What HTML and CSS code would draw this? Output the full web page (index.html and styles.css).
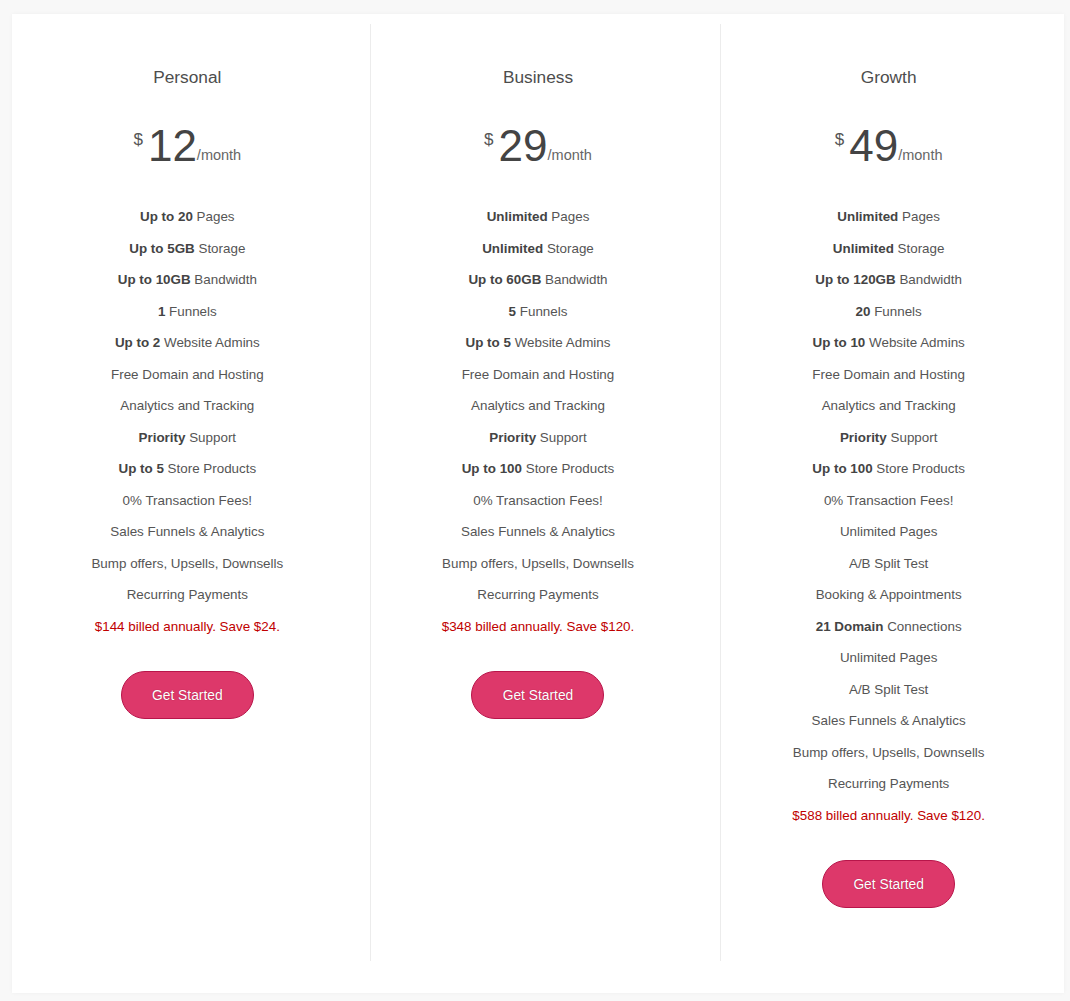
FILE: index.html
```html
<!DOCTYPE html>
<html>
<head>
<meta charset="utf-8">
<link rel="stylesheet" href="styles.css">
</head>
<body>
<div class="card">
  <div class="plans">
    <div class="plan">
      <div class="plan-inner first">
        <h3 class="plan-name">Personal</h3>
        <div class="price"><span class="cur">$</span><span class="amount">12</span><span class="per">/month</span></div>
        <ul class="features">
          <li><b>Up to 20</b> Pages</li>
          <li><b>Up to 5GB</b> Storage</li>
          <li><b>Up to 10GB</b> Bandwidth</li>
          <li><b>1</b> Funnels</li>
          <li><b>Up to 2</b> Website Admins</li>
          <li>Free Domain and Hosting</li>
          <li>Analytics and Tracking</li>
          <li><b>Priority</b> Support</li>
          <li><b>Up to 5</b> Store Products</li>
          <li>0% Transaction Fees!</li>
          <li>Sales Funnels &amp; Analytics</li>
          <li>Bump offers, Upsells, Downsells</li>
          <li>Recurring Payments</li>
          <li class="save">$144 billed annually. Save $24.</li>
        </ul>
        <a class="btn" href="#">Get Started</a>
      </div>
    </div>
    <div class="plan">
      <div class="plan-inner">
        <h3 class="plan-name">Business</h3>
        <div class="price"><span class="cur">$</span><span class="amount">29</span><span class="per">/month</span></div>
        <ul class="features">
          <li><b>Unlimited</b> Pages</li>
          <li><b>Unlimited</b> Storage</li>
          <li><b>Up to 60GB</b> Bandwidth</li>
          <li><b>5</b> Funnels</li>
          <li><b>Up to 5</b> Website Admins</li>
          <li>Free Domain and Hosting</li>
          <li>Analytics and Tracking</li>
          <li><b>Priority</b> Support</li>
          <li><b>Up to 100</b> Store Products</li>
          <li>0% Transaction Fees!</li>
          <li>Sales Funnels &amp; Analytics</li>
          <li>Bump offers, Upsells, Downsells</li>
          <li>Recurring Payments</li>
          <li class="save">$348 billed annually. Save $120.</li>
        </ul>
        <a class="btn" href="#">Get Started</a>
      </div>
    </div>
    <div class="plan">
      <div class="plan-inner">
        <h3 class="plan-name">Growth</h3>
        <div class="price"><span class="cur">$</span><span class="amount">49</span><span class="per">/month</span></div>
        <ul class="features">
          <li><b>Unlimited</b> Pages</li>
          <li><b>Unlimited</b> Storage</li>
          <li><b>Up to 120GB</b> Bandwidth</li>
          <li><b>20</b> Funnels</li>
          <li><b>Up to 10</b> Website Admins</li>
          <li>Free Domain and Hosting</li>
          <li>Analytics and Tracking</li>
          <li><b>Priority</b> Support</li>
          <li><b>Up to 100</b> Store Products</li>
          <li>0% Transaction Fees!</li>
          <li>Unlimited Pages</li>
          <li>A/B Split Test</li>
          <li>Booking &amp; Appointments</li>
          <li><b>21 Domain</b> Connections</li>
          <li>Unlimited Pages</li>
          <li>A/B Split Test</li>
          <li>Sales Funnels &amp; Analytics</li>
          <li>Bump offers, Upsells, Downsells</li>
          <li>Recurring Payments</li>
          <li class="save">$588 billed annually. Save $120.</li>
        </ul>
        <a class="btn" href="#">Get Started</a>
      </div>
    </div>
  </div>
</div>
</body>
</html>
```

FILE: styles.css
```css
html, body {
  margin: 0;
  padding: 0;
}
body {
  background: #f8f8f8;
  font-family: "Liberation Sans", Arial, sans-serif;
  color: #555;
  padding: 14px 6px 8px 12px;
}
.card {
  background: #fff;
  box-shadow: 0 0 4px rgba(0, 0, 0, 0.04);
  padding: 10px 0 32px;
}
.plans {
  display: grid;
  grid-template-columns: repeat(3, 1fr);
  align-items: stretch;
}
.plan {
  padding: 0 6px 0 7px;
}
.plan-inner {
  height: 100%;
  box-sizing: border-box;
  border-left: 1px solid #ececec;
  padding: 41px 2px 53px 0;
  display: flex;
  flex-direction: column;
  align-items: center;
}
.plan-inner.first {
  border-left-color: transparent;
}
.plan-name {
  margin: 0;
  font-size: 17.3px;
  font-weight: normal;
  line-height: 24px;
  color: #4d4d4d;
}
.price {
  margin-top: 35px;
  height: 44px;
  display: flex;
  align-items: flex-start;
  color: #444;
}
.cur {
  font-size: 17px;
  line-height: 17px;
  margin-top: 7px;
  margin-right: 5px;
  color: #555;
}
.amount {
  font-size: 44px;
  line-height: 44px;
}
.per {
  font-size: 14.5px;
  line-height: 16px;
  margin-top: 23px;
  color: #666;
}
.features {
  list-style: none;
  margin: 33px 0 0;
  padding: 0;
  text-align: center;
  font-size: 13.4px;
}
.features li {
  line-height: 21.5px;
  padding: 5px 0;
}
.features b {
  font-weight: bold;
  color: #444;
}
.features .save {
  color: #c00000;
}
.btn {
  margin-top: 29px;
  width: 133px;
  height: 48px;
  box-sizing: border-box;
  border: 1px solid #b8154a;
  border-radius: 24px;
  background: #dd386a;
  color: #fff;
  font-size: 13.8px;
  text-decoration: none;
  display: flex;
  align-items: center;
  justify-content: center;
  text-shadow: 0 0 1px rgba(120, 0, 30, 0.7);
}
```
